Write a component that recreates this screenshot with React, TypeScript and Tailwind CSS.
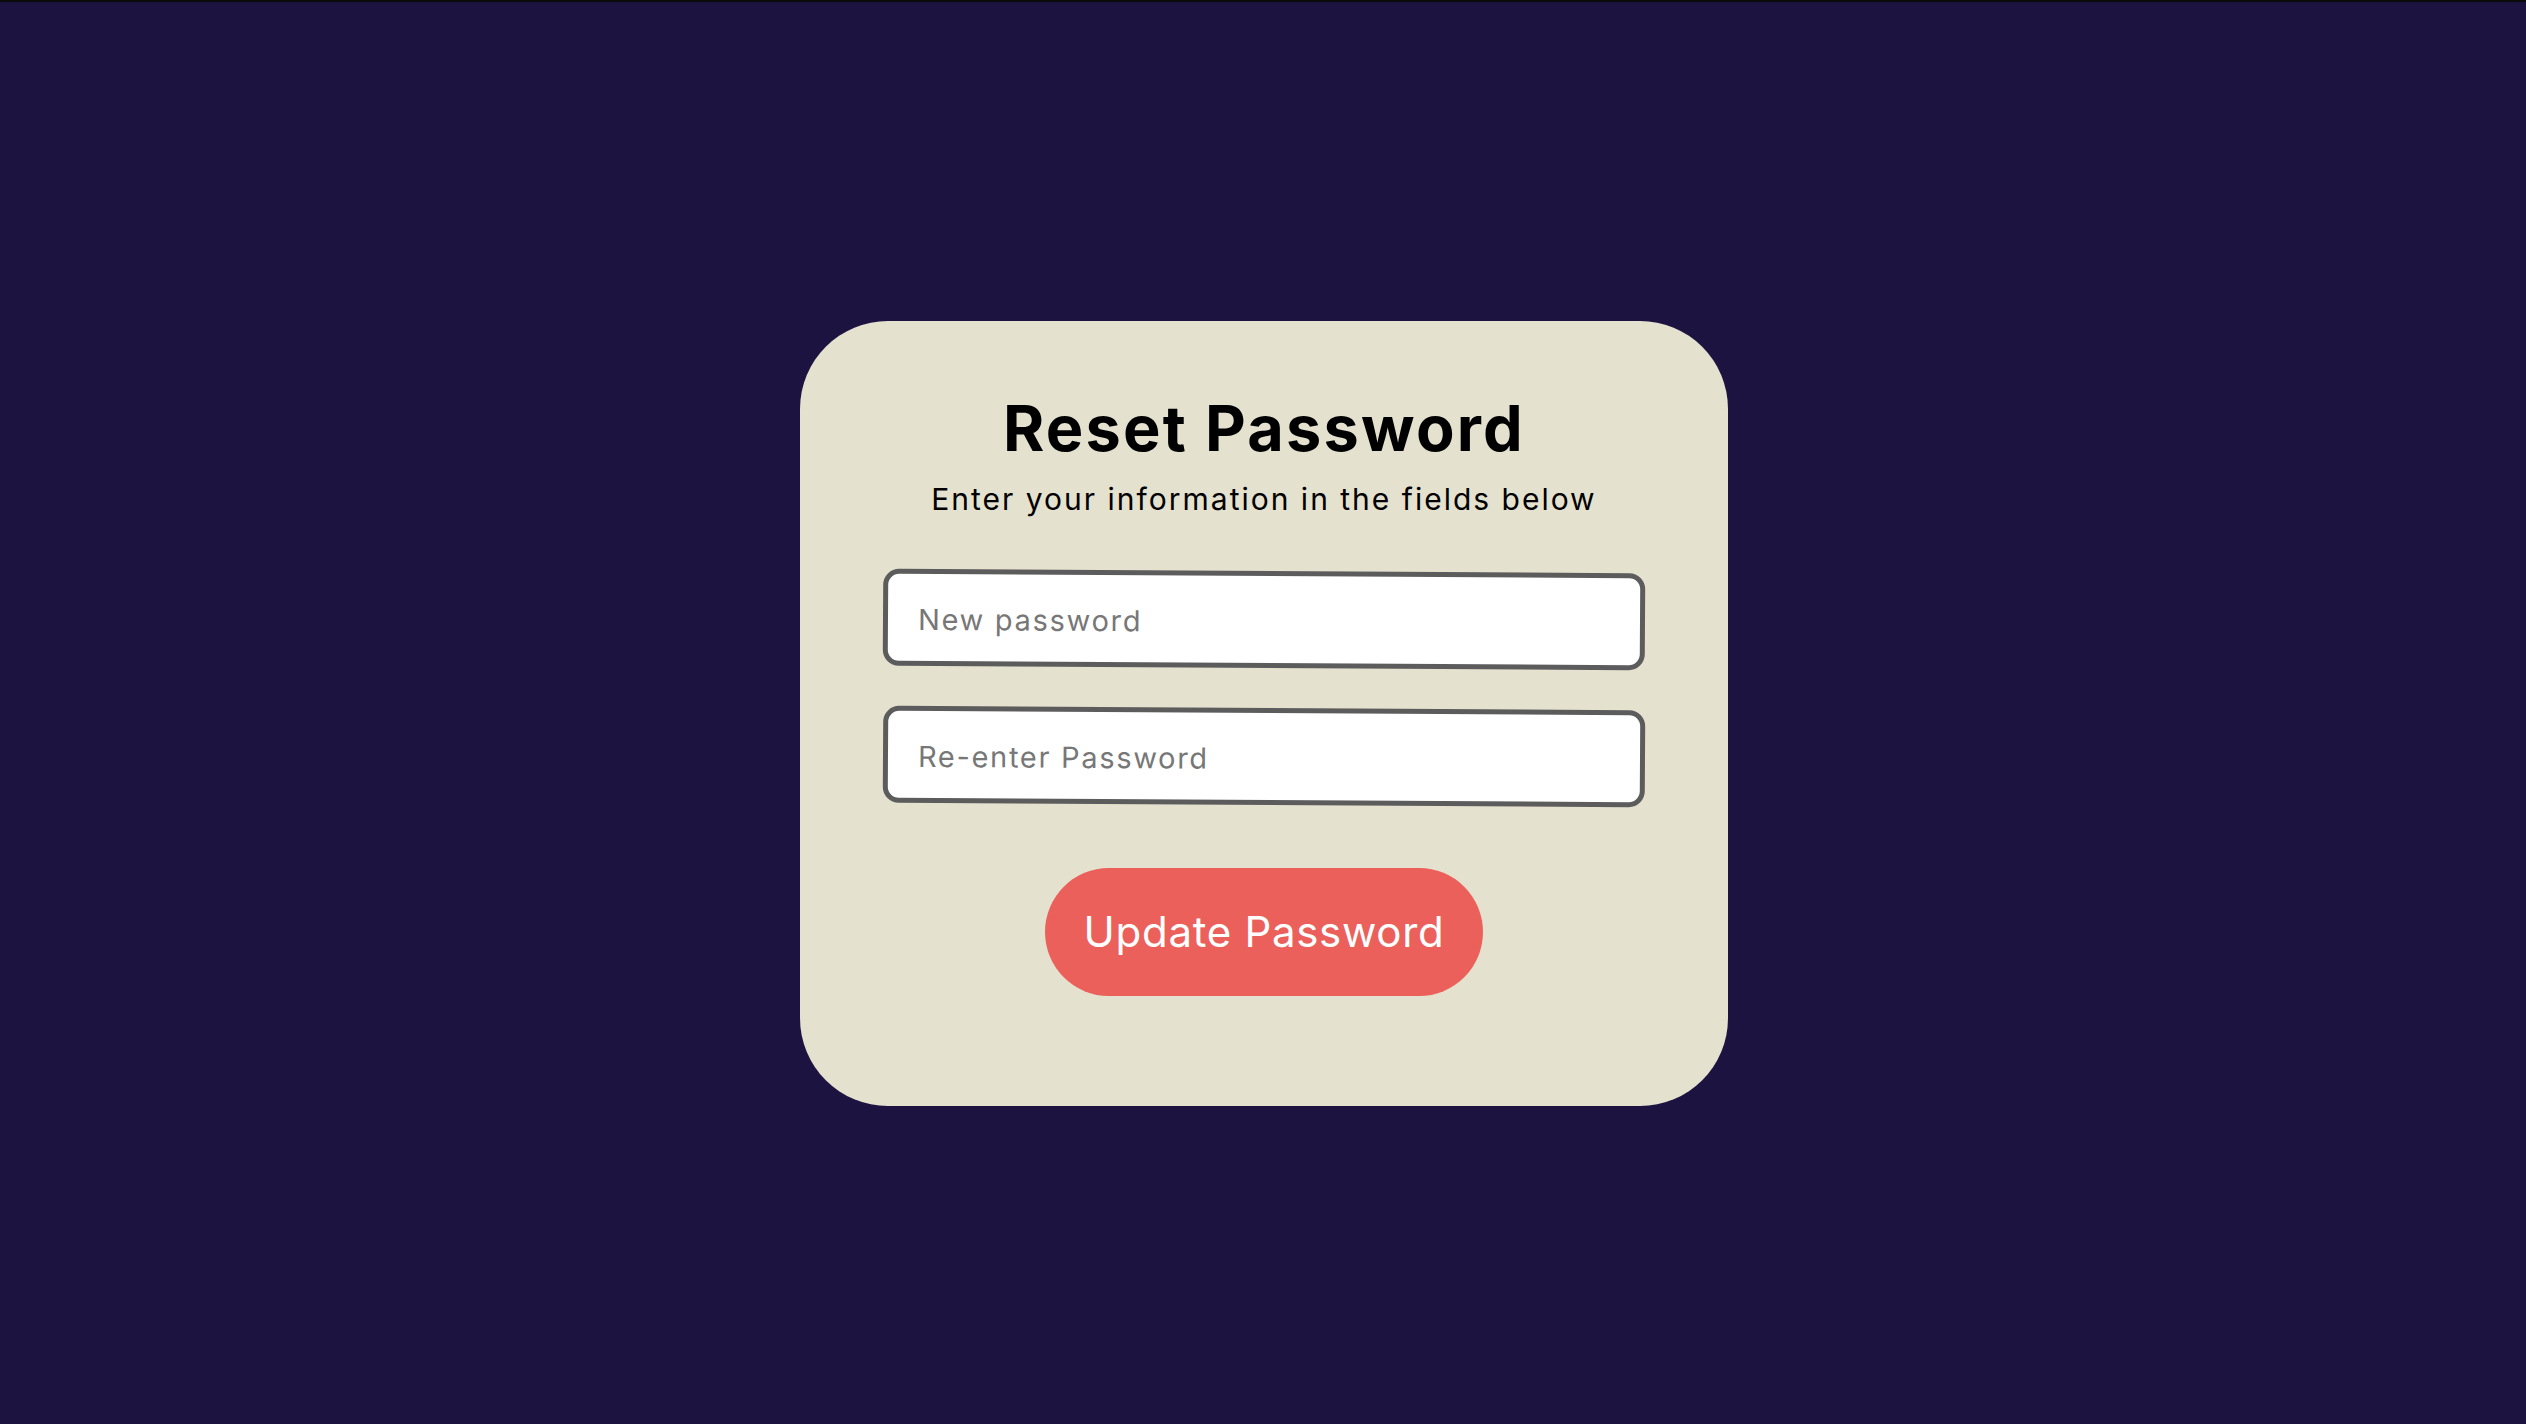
import { useState } from 'react';

export default function App() {
  const [password, setPassword] = useState('');
  const [confirm, setConfirm] = useState('');

  return (
    <div className="h-[1424px] w-full bg-[#1c1340] border-t-2 border-[#0b0b0b] flex items-center justify-center font-['Inter',sans-serif]">
      <div className="ml-[2px] w-[928px] rounded-[88px] bg-[#e4e1cf] pt-[76px] pb-[110px] flex flex-col items-center">
        <h1 className="text-[63px] leading-none font-bold tracking-[2.2px] text-black">Reset Password</h1>
        <p className="mt-[24px] text-[30px] leading-none tracking-[2px] text-black">
          Enter your information in the fields below
        </p>

        <div className="mt-[57px] flex w-[762px] flex-col gap-[40px]">
          <input
            type="password"
            value={password}
            onChange={(e) => setPassword(e.target.value)}
            placeholder="New password"
            className="h-[97px] w-full rotate-[0.35deg] rounded-[16px] border-[5px] border-[#5c5c5c] bg-white px-[30px] pt-[3px] text-[29px] tracking-[1.7px] text-black placeholder:text-[#777777] outline-none"
          />
          <input
            type="password"
            value={confirm}
            onChange={(e) => setConfirm(e.target.value)}
            placeholder="Re-enter Password"
            className="h-[97px] w-full rotate-[0.35deg] rounded-[16px] border-[5px] border-[#5c5c5c] bg-white px-[30px] pt-[3px] text-[29px] tracking-[1.7px] text-black placeholder:text-[#777777] outline-none"
          />
        </div>

        <button className="mt-[63px] h-[128px] w-[438px] rounded-full bg-[#eb605a] text-[42px] tracking-[0.7px] text-white">
          Update Password
        </button>
      </div>
    </div>
  );
}
